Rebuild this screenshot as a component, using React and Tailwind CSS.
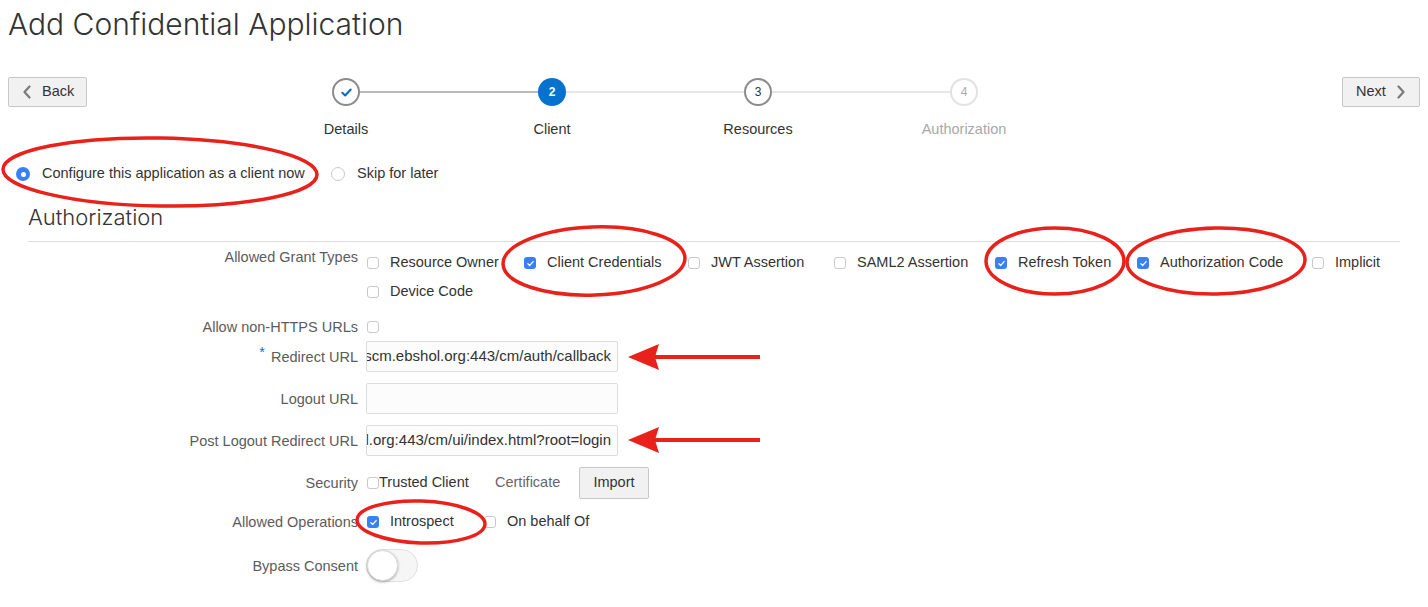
import React from "react";

const Box = ({ checked }) =>
  checked ? (
    <span className="w-3 h-3 rounded-[3px] bg-[#3a80f5] flex items-center justify-center shrink-0">
      <svg viewBox="0 0 12 12" className="w-[9px] h-[9px]">
        <path d="M2.5 6.3 L5 8.6 L9.5 3.4" fill="none" stroke="white" strokeWidth="1.7" strokeLinecap="round" strokeLinejoin="round" />
      </svg>
    </span>
  ) : (
    <span className="block w-3 h-3 rounded-[3px] border border-[#c9c9c9] bg-white shrink-0" />
  );

// w: distance from this box to the next one, as in the reference
const Item = ({ label, checked, w }) => (
  <div className={`flex items-center gap-[11px] shrink-0 ${w || ""}`}>
    <Box checked={checked} />
    <span className="whitespace-nowrap">{label}</span>
  </div>
);

const Label = ({ children }) => (
  <div className="w-[330px] shrink-0 text-right text-[#5c5c5c] leading-[20px] whitespace-nowrap">{children}</div>
);

const UrlField = ({ value }) => (
  <div className="ml-2 w-[252px] h-[31px] rounded-[2px] border border-[#dcdcdc] bg-[#fcfcfc] flex items-center justify-end overflow-hidden whitespace-nowrap pr-[6px] text-[15px]">
    <span className="shrink-0">{value}</span>
  </div>
);

const Chevron = ({ dir }) => (
  <svg viewBox="0 0 10 14" className="w-[10px] h-[14px]">
    <path
      d={dir === "left" ? "M7.5 1.5 L2.5 7 L7.5 12.5" : "M2.5 1.5 L7.5 7 L2.5 12.5"}
      fill="none"
      stroke="#7a7a7a"
      strokeWidth="2.2"
      strokeLinecap="round"
      strokeLinejoin="round"
    />
  </svg>
);

function Stepper() {
  return (
    <div className="ml-[156px] w-[824px]">
      <div className="mt-px pl-[89px] flex items-center h-7">
        <div className="w-7 h-7 rounded-full border-2 border-[#8c8c8c] bg-white flex items-center justify-center">
          <svg viewBox="0 0 14 14" className="w-[13px] h-[13px]">
            <path d="M2.5 7.3 L5.6 10.2 L11.5 3.8" fill="none" stroke="#0a6fca" strokeWidth="2.3" strokeLinecap="round" strokeLinejoin="round" />
          </svg>
        </div>
        <div className="w-[178px] h-[2px] bg-[#bababa]" />
        <div className="w-7 h-7 rounded-full bg-[#0572ce] text-white text-[12px] font-bold flex items-center justify-center">2</div>
        <div className="w-[178px] h-[2px] bg-[#e6e6e6]" />
        <div className="w-7 h-7 rounded-full border-2 border-[#8c8c8c] bg-white text-[12px] text-[#333] flex items-center justify-center">3</div>
        <div className="w-[178px] h-[2px] bg-[#e6e6e6]" />
        <div className="w-7 h-7 rounded-full border-2 border-[#e2e2e2] bg-white text-[12px] text-[#aaa] flex items-center justify-center">4</div>
      </div>
      <div className="mt-[13px] grid grid-cols-4 text-center leading-[20px]">
        <span>Details</span>
        <span>Client</span>
        <span>Resources</span>
        <span className="text-[#a8a8a8]">Authorization</span>
      </div>
    </div>
  );
}

function Annotations() {
  const red = "#e8211b";
  return (
    <svg className="absolute inset-0 pointer-events-none" width="1428" height="607" viewBox="0 0 1428 607">
      <g fill="none" stroke={red} strokeWidth="3.5">
        <ellipse cx="160" cy="172" rx="157" ry="34" transform="rotate(1 160 172)" />
        <ellipse cx="594" cy="261" rx="91" ry="34" transform="rotate(-2 594 261)" />
        <ellipse cx="1055" cy="261" rx="69" ry="33" />
        <ellipse cx="1216" cy="261" rx="89" ry="33" transform="rotate(-1 1216 261)" />
        <ellipse cx="421" cy="522" rx="64" ry="21" transform="rotate(2 421 522)" />
      </g>
      <g fill={red}>
        <rect x="652" y="355" width="108" height="4" />
        <polygon points="628,357 659,344 655,357 659,370" />
        <rect x="652" y="438" width="108" height="4" />
        <polygon points="628,440 659,427 655,440 659,453" />
      </g>
    </svg>
  );
}

export default function App() {
  return (
    <div className="relative w-[1428px] h-[607px] overflow-hidden bg-white text-[14.5px] text-[#333] font-['Liberation_Sans',Arial,sans-serif]">
      <h1 className="pt-[4px] pl-2 text-[30px] leading-[40px] font-light text-[#333] font-['Inter',sans-serif]">
        Add Confidential Application
      </h1>

      <div className="mt-[33px] px-2 flex items-start">
        <button className="w-[79px] h-[30px] rounded-[2px] border border-[#c8c8c8] bg-[#f1f1f1] flex items-center pl-[13px] gap-[10px] shrink-0">
          <Chevron dir="left" />
          <span>Back</span>
        </button>
        <Stepper />
        <button className="ml-auto w-[78px] h-[30px] rounded-[2px] border border-[#c8c8c8] bg-[#f1f1f1] flex items-center pl-[13px] gap-[10px] shrink-0">
          <span>Next</span>
          <Chevron dir="right" />
        </button>
      </div>

      <div className="mt-[25px] ml-4 flex items-center h-5">
        <div className="w-[315px] flex items-center">
          <span className="w-[14px] h-[14px] rounded-full bg-[#3a80f5] flex items-center justify-center">
            <span className="w-[5px] h-[5px] rounded-full bg-white" />
          </span>
          <span className="ml-3">Configure this application as a client now</span>
        </div>
        <span className="w-[14px] h-[14px] rounded-full border border-[#c9c9c9] bg-white" />
        <span className="ml-3">Skip for later</span>
      </div>

      <div className="ml-7 mr-7">
        <h2 className="mt-[19px] pb-[10px] border-b border-[#dedede] text-[22px] leading-[28px] font-light text-[#333] font-['Inter',sans-serif]">
          Authorization
        </h2>

        <div className="mt-[5px] flex items-start">
          <Label>Allowed Grant Types</Label>
          <div className="ml-[9px] pt-[6px] flex flex-col gap-[9px]">
            <div className="flex items-center h-5">
              <Item label="Resource Owner" w="w-[157px]" />
              <Item label="Client Credentials" checked w="w-[164px]" />
              <Item label="JWT Assertion" w="w-[146px]" />
              <Item label="SAML2 Assertion" w="w-[161px]" />
              <Item label="Refresh Token" checked w="w-[142px]" />
              <Item label="Authorization Code" checked w="w-[175px]" />
              <Item label="Implicit" />
            </div>
            <div className="flex items-center h-5">
              <Item label="Device Code" />
            </div>
          </div>
        </div>

        <div className="mt-[15px] flex items-center h-5">
          <Label>Allow non-HTTPS URLs</Label>
          <div className="ml-[9px]">
            <Box />
          </div>
        </div>

        <div className="mt-[4px] flex items-center">
          <Label>
            <span className="inline-block text-[#0572ce] mr-[6px] -translate-y-[5px]">*</span>
            Redirect URL
          </Label>
          <UrlField value="https://scm.ebshol.org:443/cm/auth/callback" />
        </div>

        <div className="mt-[11px] flex items-center">
          <Label>Logout URL</Label>
          <UrlField value="" />
        </div>

        <div className="mt-[11px] flex items-center">
          <Label>Post Logout Redirect URL</Label>
          <UrlField value="https://scm.ebshol.org:443/cm/ui/index.html?root=login" />
        </div>

        <div className="mt-[11px] flex items-center h-8">
          <Label>Security</Label>
          <div className="ml-[9px] flex items-center">
            <div className="w-[128px] flex items-center">
              <Box />
              <span>Trusted Client</span>
            </div>
            <span className="w-[84px] text-[#666]">Certificate</span>
            <button className="w-[70px] h-8 rounded-[2px] border border-[#c8c8c8] bg-[#f1f1f1]">Import</button>
          </div>
        </div>

        <div className="mt-[13px] flex items-center h-5">
          <Label>Allowed Operations</Label>
          <div className="ml-[9px] flex items-center">
            <Item label="Introspect" checked w="w-[117px]" />
            <Item label="On behalf Of" />
          </div>
        </div>

        <div className="mt-[17px] flex items-center">
          <Label>Bypass Consent</Label>
          <div className="ml-2 w-[52px] h-[33px] rounded-full border border-[#e0e0e0] bg-[#f6f6f6] flex items-center">
            <div className="w-[31px] h-[31px] rounded-full bg-white border border-[#dadada] shadow-[0_1px_3px_rgba(0,0,0,0.3)]" />
          </div>
        </div>
      </div>

      <Annotations />
    </div>
  );
}
